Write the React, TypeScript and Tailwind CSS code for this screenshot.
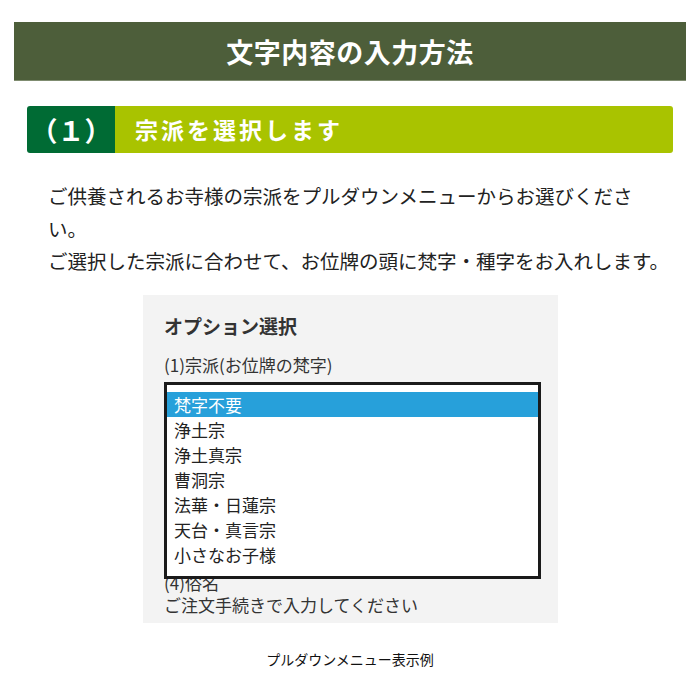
const sects = ["浄土宗", "浄土真宗", "曹洞宗", "法華・日蓮宗", "天台・真言宗", "小さなお子様"];

const App = () => {
  return (
    <div
      className="w-[700px] h-[700px] bg-white pt-[22px]"
      style={{ fontFamily: '"Noto Sans CJK JP", "Noto Sans", sans-serif' }}
    >
      <div className="mx-[14px] h-[59px] bg-[#4d5e3a] border-b border-[#7f8c70] flex items-center justify-center">
        <h1 className="text-white font-bold text-[27px] leading-none tracking-[0.5px]">文字内容の入力方法</h1>
      </div>

      <div className="mx-[27px] mt-[25px] h-[47px] flex rounded-[3px] overflow-hidden">
        <div className="w-[88px] bg-[#006b34] flex items-center justify-center text-white font-bold text-[27px] leading-none">
          （１）
        </div>
        <div className="flex-1 bg-[#a9c300] flex items-center pl-[20px] text-white font-bold text-[23px] tracking-[3px] leading-none">
          宗派を選択します
        </div>
      </div>

      <div className="ml-[48px] mt-[27px] text-[19.5px] leading-[32.5px] text-[#222] whitespace-nowrap">
        <p>ご供養されるお寺様の宗派をプルダウンメニューからお選びくださ</p>
        <p>い。</p>
        <p>ご選択した宗派に合わせて、お位牌の頭に梵字・種字をお入れします。</p>
      </div>

      <div className="ml-[143px] mt-[17px] w-[415px] h-[328px] bg-[#f3f3f3] pt-[18px] pl-[21px] text-[#333]">
        <h2 className="font-bold text-[19px] leading-[26px]">オプション選択</h2>
        <p className="mt-[14px] text-[17px] leading-[24px]">(1)宗派(お位牌の梵字)</p>
        <div className="relative z-10 mt-[5px] w-[377px] h-[197px] border-[3px] border-[#1a1a1a] bg-white pt-[7px]">
          <div className="h-[25px] bg-[#27a0da] text-white text-[17px] leading-[25px] pl-[7px]">梵字不要</div>
          {sects.map((s) => (
            <div key={s} className="h-[25px] text-[#222] text-[17px] leading-[25px] pl-[7px]">
              {s}
            </div>
          ))}
        </div>
        <p className="-mt-[7px] text-[17px] leading-[22px]">(4)俗名</p>
        <p className="text-[17px] leading-[22px]">ご注文手続きで入力してください</p>
      </div>

      <p className="mt-[26px] text-center text-[14px] leading-[20px] text-[#111]">プルダウンメニュー表示例</p>
    </div>
  );
};

export default App;
